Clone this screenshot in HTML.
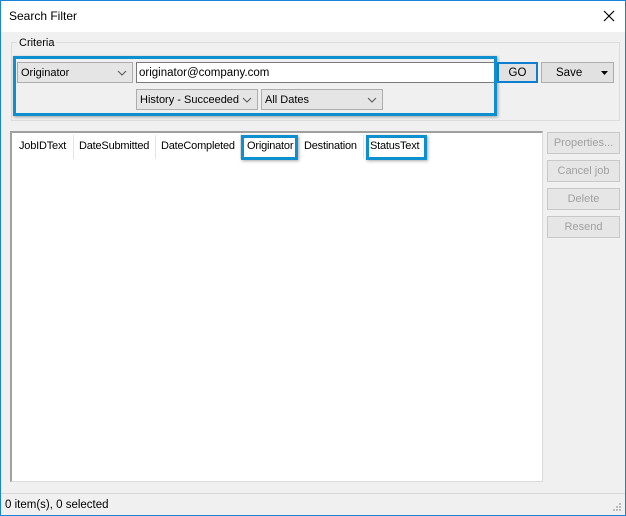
<!DOCTYPE html><html><head><style>
body{margin:0;width:626px;height:516px;overflow:hidden;font-family:"Liberation Sans",sans-serif;font-size:11.5px;color:#000}
.win{position:absolute;left:0;top:0;width:624px;height:514px;border:1px solid #1883d7;background:#f0f0f0}
.a{position:absolute;box-sizing:border-box;white-space:nowrap}
.combo{background:#e5e5e5;border:1px solid #adadad;padding:4px 0 0 3px;font-size:11px}
.chev{position:absolute;right:5px;top:5px}
.btn{background:#e1e1e1;border:1px solid #adadad;text-align:center;padding-top:4px}
.dis{color:#a0a0a0;background:#e6e6e6;border-color:#c8c8c8;font-size:11px}
.hl{border:3px solid #0e8fce;box-shadow:1px 1px 3px rgba(0,0,0,.35)}
.col{position:absolute;top:134px;height:24px;border-right:1px solid #e5e5e5;padding:5px 0 0 5px;box-sizing:border-box;font-size:11px;letter-spacing:-0.2px}
</style></head><body><div class="win">
<div class="a" style="left:0;top:0;width:624px;height:31px;background:#fff"></div>
<div class="a" style="left:8px;top:8px;font-size:12px">Search Filter</div>
<svg class="a" style="left:602px;top:9px" width="12" height="12"><path d="M1 1L11 11M11 1L1 11" stroke="#000" stroke-width="1.2"/></svg>
<div class="a" style="left:10px;top:41px;width:609px;height:79px;border:1px solid #dcdcdc"></div>
<div class="a" style="left:16px;top:36px;background:#f0f0f0;padding:0 2px;font-size:11px">Criteria</div>
<div class="a combo" style="left:16px;top:61px;width:116px;height:21px">Originator<svg class="chev" width="10" height="10"><path d="M1 3L5 7L9 3" stroke="#555" fill="none"/></svg></div>
<div class="a" style="left:135px;top:61px;width:359px;height:21px;background:#fff;border:1px solid #7a7a7a;padding:4px 0 0 2px">originator@company.com</div>
<div class="a combo" style="left:135px;top:88px;width:122px;height:21px">History - Succeeded<svg class="chev" width="10" height="10"><path d="M1 3L5 7L9 3" stroke="#555" fill="none"/></svg></div>
<div class="a combo" style="left:260px;top:88px;width:122px;height:21px">All Dates<svg class="chev" width="10" height="10"><path d="M1 3L5 7L9 3" stroke="#555" fill="none"/></svg></div>
<div class="a hl" style="left:12px;top:55px;width:484px;height:60px"></div>
<div class="a btn" style="left:496px;top:61px;width:41px;height:21px;border:2px solid #0e7fd0;padding-top:3px">GO</div>
<div class="a btn" style="left:540px;top:61px;width:73px;height:21px;text-align:left;padding-left:14px">Save<svg class="a" style="right:5px;top:8px" width="7" height="4"><path d="M0 0H7L3.5 4Z" fill="#000"/></svg></div>
<div class="a" style="left:9px;top:130px;width:533px;height:351px;background:#fff;border:1px solid #dadada;border-top:2px solid #a0a0a0;border-left:2px solid #a0a0a0"></div>
<div class="col" style="left:13px;width:60px">JobIDText</div>
<div class="col" style="left:73px;width:82px">DateSubmitted</div>
<div class="col" style="left:155px;width:85px">DateCompleted</div>
<div class="col" style="left:240px;width:56px;padding-left:6px;border:none">Originator</div>
<div class="col" style="left:298px;width:65px">Destination</div>
<div class="col" style="left:363px;width:62px;border:none;padding-left:6px">StatusText</div>
<div class="a hl" style="left:240px;top:134px;width:57px;height:25px"></div>
<div class="a hl" style="left:365px;top:134px;width:61px;height:25px"></div>
<div class="a btn dis" style="left:546px;top:131px;width:73px;height:22px">Properties...</div>
<div class="a btn dis" style="left:546px;top:159px;width:73px;height:22px">Cancel job</div>
<div class="a btn dis" style="left:546px;top:187px;width:73px;height:22px">Delete</div>
<div class="a btn dis" style="left:546px;top:215px;width:73px;height:22px">Resend</div>
<div class="a" style="left:0;top:492px;width:624px;height:1px;background:#d7d7d7"></div>
<div class="a" style="left:4px;top:498px">0 item(s), 0 selected</div>
<svg class="a" style="left:611px;top:501px" width="10" height="10"><g fill="#bbb"><rect x="7" y="1" width="2" height="2"/><rect x="4" y="4" width="2" height="2"/><rect x="7" y="4" width="2" height="2"/><rect x="1" y="7" width="2" height="2"/><rect x="4" y="7" width="2" height="2"/><rect x="7" y="7" width="2" height="2"/></g></svg>
</div></body></html>
